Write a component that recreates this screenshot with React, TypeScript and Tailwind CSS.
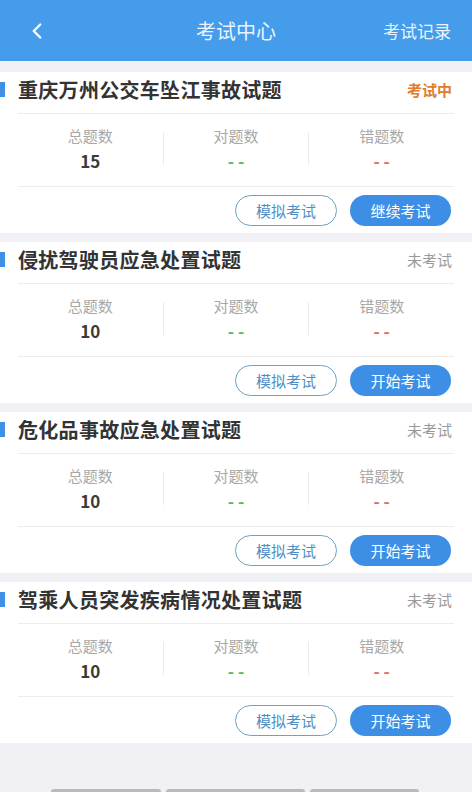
import { ChevronLeft } from 'lucide-react';

interface Exam {
    title: string;
    status: string;
    active: boolean;
    total: number;
    action: string;
}

const exams: Exam[] = [
    { title: '重庆万州公交车坠江事故试题', status: '考试中', active: true, total: 15, action: '继续考试' },
    { title: '侵扰驾驶员应急处置试题', status: '未考试', active: false, total: 10, action: '开始考试' },
    { title: '危化品事故应急处置试题', status: '未考试', active: false, total: 10, action: '开始考试' },
    { title: '驾乘人员突发疾病情况处置试题', status: '未考试', active: false, total: 10, action: '开始考试' },
];

const font = { fontFamily: '"Noto Sans CJK SC", "Noto Sans", sans-serif' };

const Stat = ({ label, value, color }: { label: string; value: string; color: string }) => (
    <div className="flex-1 flex flex-col items-center">
        <span className="text-[15px] text-[#a8a8a8] leading-none">{label}</span>
        <span className={`mt-[9px] text-[17px] font-bold leading-none ${color}`}>{value}</span>
    </div>
);

const ExamCard = ({ exam }: { exam: Exam }) => (
    <div className="bg-white h-[161px] flex flex-col">
        <div className="flex items-center h-[41px] pb-[6px]">
            <div className="w-[5px] h-[15px] bg-[#3f90e4]"></div>
            <h2 className="ml-[13px] text-[20px] tracking-[0.3px] font-bold text-[#333333] leading-none flex-1">{exam.title}</h2>
            <span className={`mr-[20px] text-[15px] leading-none ${exam.active ? 'text-[#e07d2c] font-bold' : 'text-[#9a9a9a]'}`}>
                {exam.status}
            </span>
        </div>
        <div className="mx-[18px] border-t border-[#ececec]"></div>
        <div className="mx-[18px] flex h-[72px] items-center pb-[4px]">
            <Stat label="总题数" value={String(exam.total)} color="text-[#3a3a3a]" />
            <div className="w-px h-[33px] bg-[#ececec]"></div>
            <Stat label="对题数" value="- -" color="text-[#5cb85c]" />
            <div className="w-px h-[33px] bg-[#ececec]"></div>
            <Stat label="错题数" value="- -" color="text-[#e06a6a]" />
        </div>
        <div className="mx-[18px] border-t border-[#ececec]"></div>
        <div className="flex justify-end items-center gap-[13px] pr-[21px] pt-[8px]">
            <button className="w-[102px] h-[31px] rounded-full border border-[#6aa3c6] text-[#4b8fc6] text-[15px] leading-none">
                模拟考试
            </button>
            <button className="w-[101px] h-[31px] rounded-full bg-[#3d8fe6] text-white text-[15px] leading-none">
                {exam.action}
            </button>
        </div>
    </div>
);

export default function App() {
    return (
        <div className="w-[472px] h-[792px] bg-[#f0f0f5] flex flex-col overflow-hidden" style={font}>
            <header className="h-[61px] bg-[#449cea] flex items-center px-[24px] relative shrink-0">
                <ChevronLeft size={26} strokeWidth={2.2} className="text-white" />
                <h1 className="absolute left-1/2 -translate-x-1/2 text-[20px] text-[#eaf3fd] leading-none">考试中心</h1>
                <span className="ml-auto mr-[-3px] text-[17px] text-[#eaf3fd] leading-none">考试记录</span>
            </header>
            <main className="flex flex-col gap-[9px] pt-[11px] flex-1">
                {exams.map((exam) => (
                    <ExamCard key={exam.title} exam={exam} />
                ))}
            </main>
            <div className="flex h-[3px] pl-[51px] gap-[5px] shrink-0">
                <div className="w-[110px] bg-[#b9b9bd] rounded-t-sm"></div>
                <div className="w-[139px] bg-[#b9b9bd] rounded-t-sm"></div>
                <div className="w-[109px] bg-[#b9b9bd] rounded-t-sm"></div>
            </div>
        </div>
    );
}
